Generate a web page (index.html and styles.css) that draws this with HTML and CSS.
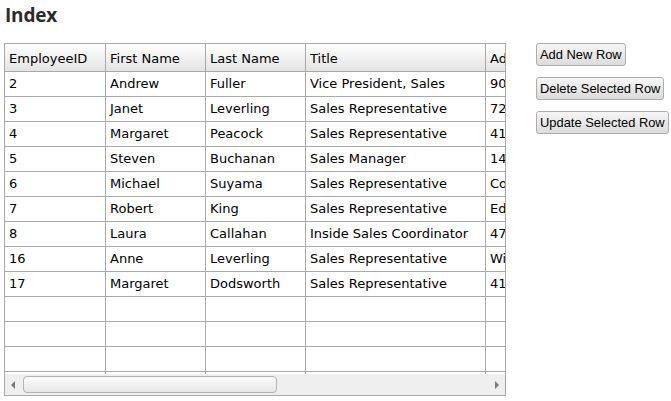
FILE: index.html
```html
<!DOCTYPE html>
<html>
<head>
<meta charset="utf-8">
<link rel="stylesheet" href="styles.css">
</head>
<body>
<h1 class="title">Index</h1>
<div class="main">
  <div class="grid">
    <div class="viewport">
      <table class="table">
        <colgroup>
          <col class="c1"><col class="c2"><col class="c3"><col class="c4"><col class="c5">
        </colgroup>
        <thead>
          <tr><th>EmployeeID</th><th>First Name</th><th>Last Name</th><th>Title</th><th>Address</th></tr>
        </thead>
        <tbody>
          <tr><td>2</td><td>Andrew</td><td>Fuller</td><td>Vice President, Sales</td><td>908 W. Capital Way</td></tr>
          <tr><td>3</td><td>Janet</td><td>Leverling</td><td>Sales Representative</td><td>722 Moss Bay Blvd.</td></tr>
          <tr><td>4</td><td>Margaret</td><td>Peacock</td><td>Sales Representative</td><td>4110 Old Redmond Rd.</td></tr>
          <tr><td>5</td><td>Steven</td><td>Buchanan</td><td>Sales Manager</td><td>14 Garrett Hill</td></tr>
          <tr><td>6</td><td>Michael</td><td>Suyama</td><td>Sales Representative</td><td>Coventry House</td></tr>
          <tr><td>7</td><td>Robert</td><td>King</td><td>Sales Representative</td><td>Edgeham Hollow</td></tr>
          <tr><td>8</td><td>Laura</td><td>Callahan</td><td>Inside Sales Coordinator</td><td>4726 - 11th Ave. N.E.</td></tr>
          <tr><td>16</td><td>Anne</td><td>Leverling</td><td>Sales Representative</td><td>Winchester Way</td></tr>
          <tr><td>17</td><td>Margaret</td><td>Dodsworth</td><td>Sales Representative</td><td>4110 Old Redmond Rd.</td></tr>
          <tr><td></td><td></td><td></td><td></td><td></td></tr>
          <tr><td></td><td></td><td></td><td></td><td></td></tr>
          <tr><td></td><td></td><td></td><td></td><td></td></tr>
          <tr><td></td><td></td><td></td><td></td><td></td></tr>
        </tbody>
      </table>
    </div>
    <div class="hscroll">
      <span class="arrow arrow-left"></span>
      <div class="track"><div class="thumb"></div></div>
      <span class="arrow arrow-right"></span>
    </div>
  </div>
  <div class="buttons">
    <button class="btn">Add New Row</button>
    <button class="btn">Delete Selected Row</button>
    <button class="btn">Update Selected Row</button>
  </div>
</div>
</body>
</html>
```
FILE: styles.css
```css
html, body {
  margin: 0;
  padding: 0;
  background: #ffffff;
}
body {
  padding: 0 0 0 4px;
}
.title {
  font-family: "Open Sans", "DejaVu Sans", sans-serif;
  font-weight: 700;
  font-size: 19px;
  line-height: 26px;
  color: #2b2b2b;
  margin: 2px 0 0 1px;
  letter-spacing: -0.2px;
}
.main {
  display: flex;
  align-items: flex-start;
  margin-top: 15px;
}
.grid {
  flex: none;
  width: 500px;
  height: 351px;
  border: 1px solid #a9a9a9;
  display: flex;
  flex-direction: column;
  overflow: hidden;
}
.viewport {
  flex: 1;
  overflow: hidden;
}
.table {
  border-collapse: separate;
  border-spacing: 0;
  table-layout: fixed;
  width: 501px;
  font-family: "DejaVu Sans", Verdana, sans-serif;
  font-size: 13px;
  color: #000;
}
.c1 { width: 101px; }
.c2 { width: 100px; }
.c3 { width: 100px; }
.c4 { width: 180px; }
.c5 { width: 20px; }
.table th, .table td {
  box-sizing: border-box;
  height: 25px;
  padding: 0 4px;
  border-right: 1px solid #a9a9a9;
  border-bottom: 1px solid #a9a9a9;
  text-align: left;
  font-weight: 400;
  white-space: nowrap;
  overflow: hidden;
  text-overflow: clip;
  vertical-align: middle;
}
.table th {
  height: 28px;
  padding-top: 1px;
  background: linear-gradient(#ffffff, #e4e4e4);
}
.table td {
  padding-bottom: 1px;
}
.hscroll {
  height: 21px;
  flex: none;
  background: #efefef;
  display: flex;
  align-items: center;
  padding: 0 6px;
  box-sizing: border-box;
}
.arrow {
  width: 0;
  height: 0;
  border-top: 4px solid transparent;
  border-bottom: 4px solid transparent;
  flex: none;
}
.arrow-left {
  border-right: 4px solid #7a7a7a;
}
.arrow-right {
  border-left: 4px solid #7a7a7a;
}
.track {
  flex: 1;
  height: 17px;
  margin: 0 8px;
}
.thumb {
  width: 254px;
  height: 17px;
  box-sizing: border-box;
  border: 1px solid #b3b3b3;
  border-radius: 4px;
  background: linear-gradient(#fcfcfc, #e6e6e6);
}
.buttons {
  flex: none;
  display: flex;
  flex-direction: column;
  align-items: flex-start;
  gap: 11px;
  margin-left: 30px;
}
.btn {
  font-family: "Liberation Sans", Arial, sans-serif;
  font-size: 12.9px;
  color: #000;
  height: 23px;
  padding: 0 3px;
  margin: 0;
  white-space: nowrap;
  border: 1px solid #acacac;
  border-radius: 3px;
  background: linear-gradient(#f6f6f6, #dcdcdc);
  cursor: pointer;
}
```
